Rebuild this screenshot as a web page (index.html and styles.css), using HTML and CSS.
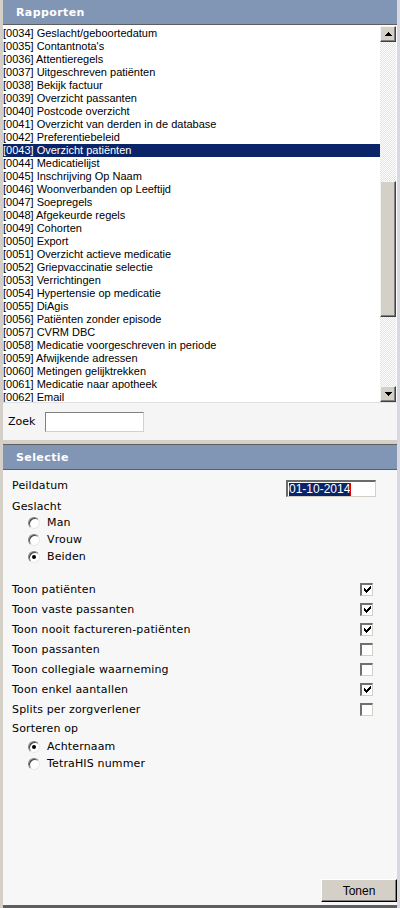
FILE: index.html
```html
<!DOCTYPE html>
<html lang="nl">
<head>
<meta charset="utf-8">
<title>Rapporten</title>
<link rel="stylesheet" href="styles.css">
</head>
<body>
<div class="app">
  <section class="panel rapporten">
    <div class="header"><span class="header-title">Rapporten</span></div>
    <div class="listbox">
      <ul class="list">
        <li>[0034] Geslacht/geboortedatum</li>
        <li>[0035] Contantnota's</li>
        <li>[0036] Attentieregels</li>
        <li>[0037] Uitgeschreven patiënten</li>
        <li>[0038] Bekijk factuur</li>
        <li>[0039] Overzicht passanten</li>
        <li>[0040] Postcode overzicht</li>
        <li>[0041] Overzicht van derden in de database</li>
        <li>[0042] Preferentiebeleid</li>
        <li class="selected">[0043] Overzicht patiënten</li>
        <li>[0044] Medicatielijst</li>
        <li>[0045] Inschrijving Op Naam</li>
        <li>[0046] Woonverbanden op Leeftijd</li>
        <li>[0047] Soepregels</li>
        <li>[0048] Afgekeurde regels</li>
        <li>[0049] Cohorten</li>
        <li>[0050] Export</li>
        <li>[0051] Overzicht actieve medicatie</li>
        <li>[0052] Griepvaccinatie selectie</li>
        <li>[0053] Verrichtingen</li>
        <li>[0054] Hypertensie op medicatie</li>
        <li>[0055] DiAgis</li>
        <li>[0056] Patiënten zonder episode</li>
        <li>[0057] CVRM DBC</li>
        <li>[0058] Medicatie voorgeschreven in periode</li>
        <li>[0059] Afwijkende adressen</li>
        <li>[0060] Metingen gelijktrekken</li>
        <li>[0061] Medicatie naar apotheek</li>
        <li>[0062] Email</li>
      </ul>
      <div class="scrollbar">
        <div class="sb-btn"><svg width="7" height="4" viewBox="0 0 7 4"><path d="M3 0h1v1h1v1h1v1h1v1H0V3h1V2h1V1h1z" fill="#000"/></svg></div>
        <div class="sb-track">
          <div class="sb-gap-top"></div>
          <div class="sb-thumb"></div>
        </div>
        <div class="sb-btn"><svg width="7" height="4" viewBox="0 0 7 4"><path d="M0 0h7v1H6v1H5v1H4v1H3V3H2V2H1V1H0z" fill="#000"/></svg></div>
      </div>
    </div>
    <div class="search">
      <label class="search-label" for="zoek">Zoek</label>
      <input class="search-input" id="zoek" type="text">
    </div>
  </section>
  <div class="separator"></div>
  <section class="panel selectie">
    <div class="header"><span class="header-title">Selectie</span></div>
    <div class="form">
      <div class="row row-date">
        <span class="label">Peildatum</span>
        <span class="date-input"><span class="date-sel">01-10-2014</span><span class="caret"></span></span>
      </div>
      <div class="row row-group">Geslacht</div>
      <div class="row row-radio"><span class="radio"></span>Man</div>
      <div class="row row-radio"><span class="radio"></span>Vrouw</div>
      <div class="row row-radio"><span class="radio checked"></span>Beiden</div>
      <div class="spacer"></div>
      <div class="row row-check"><span>Toon patiënten</span><span class="checkbox checked"></span></div>
      <div class="row row-check"><span>Toon vaste passanten</span><span class="checkbox checked"></span></div>
      <div class="row row-check"><span>Toon nooit factureren-patiënten</span><span class="checkbox checked"></span></div>
      <div class="row row-check"><span>Toon passanten</span><span class="checkbox"></span></div>
      <div class="row row-check"><span>Toon collegiale waarneming</span><span class="checkbox"></span></div>
      <div class="row row-check"><span>Toon enkel aantallen</span><span class="checkbox checked"></span></div>
      <div class="row row-check"><span>Splits per zorgverlener</span><span class="checkbox"></span></div>
      <div class="row row-sort">Sorteren op</div>
      <div class="row row-radio"><span class="radio checked"></span>Achternaam</div>
      <div class="row row-radio"><span class="radio"></span>TetraHIS nummer</div>
    </div>
    <div class="footer">
      <button class="btn" type="button">Tonen</button>
    </div>
  </section>
</div>
</body>
</html>
```

FILE: styles.css
```css
* { box-sizing: border-box; }
html, body { margin: 0; padding: 0; }
body {
  width: 400px;
  height: 908px;
  background: #d4d0c8;
  overflow: hidden;
}
.app {
  width: 400px;
  height: 908px;
  display: flex;
  flex-direction: column;
  border-left: 3px solid #d4d0c8;
  border-right: 3px solid #d8d8e0;
}
.panel { display: flex; flex-direction: column; }
.header {
  height: 25px;
  background: #8196b5;
  border-bottom: 1px solid #5e5e5e;
  display: flex;
  align-items: center;
  padding-left: 13px;
}
.header-title {
  font-family: "DejaVu Sans", Verdana, sans-serif;
  font-weight: bold;
  font-size: 11px;
  color: #fff;
  letter-spacing: 0.4px;
}
.listbox {
  height: 378px;
  display: flex;
  background: #fff;
  border-bottom: 1px solid #e0e0e0;
}
.list {
  flex: 1;
  margin: 0;
  padding: 2px 0 0 0;
  list-style: none;
  font-family: "Liberation Sans", Arial, sans-serif;
  font-size: 11px;
  color: #000;
  overflow: hidden;
}
.list li {
  height: 13px;
  line-height: 13px;
  white-space: nowrap;
}
.list li.selected { background: #0a246a; color: #fff; }
.scrollbar {
  width: 16px;
  display: flex;
  flex-direction: column;
  margin-right: 1px;
  padding-top: 1px;
}
.sb-btn {
  width: 16px;
  height: 16px;
  background: #d4d0c8;
  border-top: 1px solid #f4f4f4;
  border-left: 1px solid #f4f4f4;
  border-right: 1px solid #404040;
  border-bottom: 1px solid #404040;
  box-shadow: inset -1px -1px 0 #808080;
  display: flex;
  align-items: center;
  justify-content: center;
}
.sb-track {
  flex: 1;
  background: repeating-conic-gradient(#e4e2dc 0 25%, #fff 0 50%) 0 0 / 2px 2px;
  display: flex;
  flex-direction: column;
}
.sb-gap-top { height: 139px; }
.sb-thumb {
  height: 136px;
  background: #d4d0c8;
  border-top: 1px solid #f4f4f4;
  border-left: 1px solid #f4f4f4;
  border-right: 1px solid #404040;
  border-bottom: 1px solid #404040;
  box-shadow: inset -1px -1px 0 #808080;
}
.search {
  height: 37px;
  background: #f5f5f5;
  display: flex;
  align-items: center;
  padding-left: 5px;
  gap: 10px;
}
.search-label {
  font-family: "DejaVu Sans", Verdana, sans-serif;
  font-size: 11px;
  color: #000;
}
.search-input {
  width: 99px;
  height: 20px;
  margin: 0;
  padding: 0;
  background: #fff;
  border-top: 1px solid #808080;
  border-left: 1px solid #808080;
  border-right: 1px solid #d4d0c8;
  border-bottom: 1px solid #d4d0c8;
  outline: none;
}
.separator { height: 4px; background: #d4d0c8; }
.selectie { flex: 1; background: #f7f7f7; border-bottom: 3px solid #5e5e5e; }
.selectie .header { border-top: 1px solid #5e5e5e; height: 26px; }
.form {
  flex: 1;
  padding: 8px 24px 0 9px;
  display: flex;
  flex-direction: column;
  font-family: "DejaVu Sans", Verdana, sans-serif;
  font-size: 11px;
  letter-spacing: 0.15px;
  color: #000;
}
.row { display: flex; align-items: center; white-space: nowrap; }
.row-date { height: 20px; justify-content: space-between; align-items: flex-start; padding-right: 0; }
.row-date .label { line-height: 16px; }
.date-input {
  margin-top: 2px;
  margin-right: -3px;
  width: 90px;
  height: 17px;
  background: #fff;
  border-top: 2px solid #6a6a6a;
  border-left: 2px solid #6a6a6a;
  border-right: 1px solid #d4d0c8;
  border-bottom: 1px solid #d4d0c8;
  display: flex;
  align-items: center;
  padding-left: 1px;
  font-family: "Liberation Sans", Arial, sans-serif;
  font-size: 12px;
  letter-spacing: 0;
}
.date-sel { background: #0a246a; color: #fff; line-height: 13px; }
.caret { width: 1px; height: 13px; background: #e00000; }
.row-group { height: 16px; }
.row-radio { height: 17px; padding-left: 16px; gap: 7px; }
.spacer { height: 14px; }
.row-check { height: 20px; justify-content: space-between; }
.row-sort { height: 19px; }
.radio {
  width: 12px;
  height: 12px;
  border-radius: 50%;
  background: #fff;
  border: 1px solid;
  border-color: #808080 #e8e8e8 #e8e8e8 #808080;
  box-shadow: inset 1px 1px 0 #404040;
  display: inline-flex;
  align-items: center;
  justify-content: center;
}
.radio.checked::after {
  content: "";
  width: 4px;
  height: 4px;
  border-radius: 50%;
  background: #000;
}
.checkbox {
  width: 13px;
  height: 13px;
  background: #fff;
  border-top: 2px solid #707070;
  border-left: 2px solid #707070;
  border-right: 1px solid #d4d0c8;
  border-bottom: 1px solid #d4d0c8;
  display: inline-flex;
  align-items: center;
  justify-content: center;
}
.checkbox.checked {
  background: #fff url("data:image/svg+xml,%3Csvg xmlns='http://www.w3.org/2000/svg' width='7' height='7' viewBox='0 0 7 7'%3E%3Cpath d='M6 0h1v3H6v1H5v1H4v1H3v1H2V6H1V5H0V2h1v1h1v1h1V3h1V2h1V1h1z' fill='%23000'/%3E%3C/svg%3E") no-repeat 2px 1px;
}
.footer {
  height: 26px;
  display: flex;
  justify-content: flex-end;
  align-items: flex-start;
  padding-right: 0;
}
.btn {
  width: 76px;
  height: 23px;
  margin: 0;
  padding: 0;
  background: #d4d0c8;
  border-top: 1px solid #fff;
  border-left: 1px solid #fff;
  border-right: 1px solid #000;
  border-bottom: 1px solid #000;
  box-shadow: inset -1px -1px 0 #808080;
  font-family: "Liberation Sans", Arial, sans-serif;
  font-size: 12px;
  color: #000;
}
```
